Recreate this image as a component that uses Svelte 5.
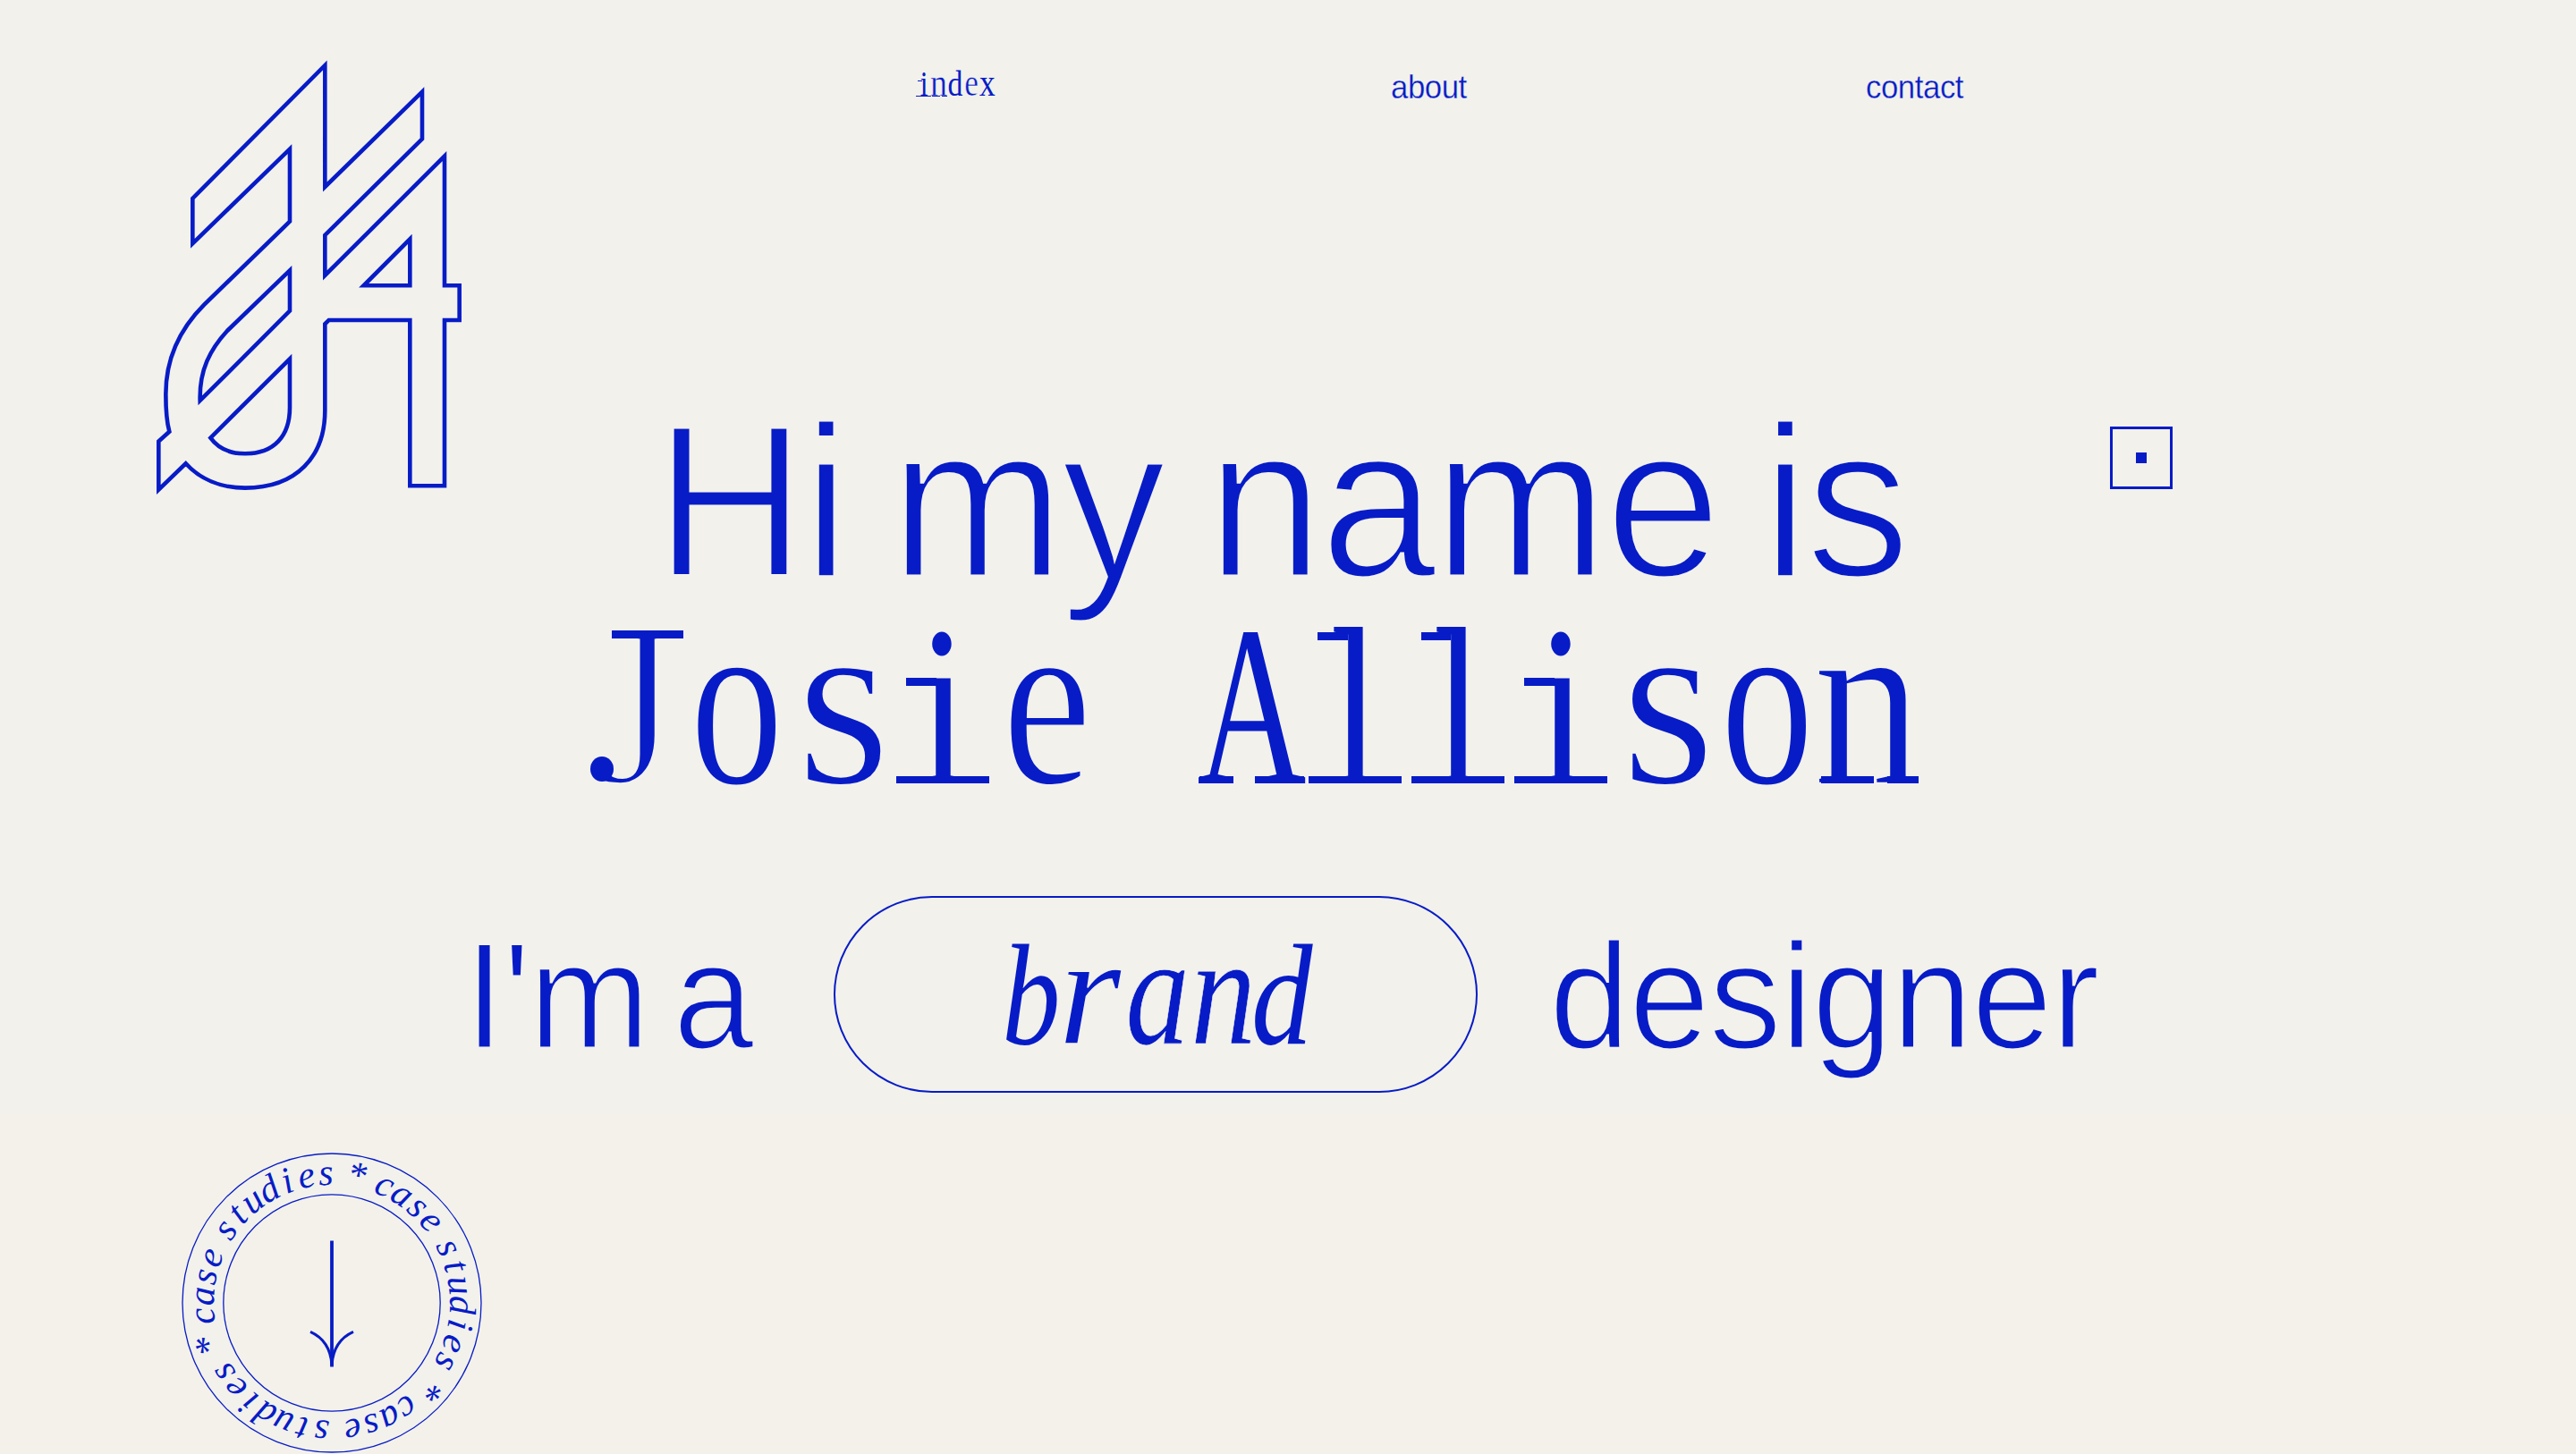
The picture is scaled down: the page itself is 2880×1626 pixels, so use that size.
<script>
  // Per-letter fitting for the fixed-pitch serif: horizontal scale, vertical
  // scale, offset (em), outline thinning (em), slab strokes [x, top, width]
  // and an optional round terminal [x, top, width, height].
  const roman = {
    J: { sx: 0.92, sy: 0.99, dx: 0.052, thin: 0.026, slabs: [[0.126, 0.658, 0.309]], ball: [0.035, 0.115, 0.1, 0.108] },
    o: { sx: 0.8, sy: 1.065, dx: 0.022, thin: 0.008 },
    s: { sx: 1.04, sy: 1.065, dx: 0.036, thin: 0.012 },
    i: { sx: 0.78, sy: 0.985, dx: 0.116, thin: 0, slabs: [[0.021, 0.033, 0.4], [0.0635, 0.453, 0.13]] },
    e: { sx: 0.87, sy: 1.065, dx: 0.032, thin: 0.012 },
    A: { sx: 0.65, sy: 0.985, dx: -0.014, thin: 0, slabs: [[-0.004, 0.033, 0.148], [0.236, 0.033, 0.212]] },
    l: { sx: 0.78, sy: 0.97, dx: 0.116, thin: 0, slabs: [[0.022, 0.033, 0.4], [0.0625, 0.65, 0.13]] },
    n: { sx: 0.936, sy: 1.065, dx: -0.022, thin: 0.01, slabs: [[0.011, 0.033, 0.225], [0.295, 0.033, 0.137]] },
    d: { sx: 0.83, sy: 1, dx: 0.01, thin: 0 },
    x: { sx: 0.87, sy: 1.065, dx: 0, thin: 0 },
    ' ': { sx: 1, sy: 1, dx: 0, thin: 0 }
  };
  const italic = {
    b: { sx: 0.79, sy: 0.975, dx: 0.014, thin: 0 },
    r: { sx: 1.1, sy: 1.07, dx: -0.03, thin: 0.008 },
    a: { sx: 0.87, sy: 1.07, dx: 0.008, thin: 0.004 },
    n: { sx: 0.89, sy: 1.07, dx: 0.024, thin: 0.004 },
    d: { sx: 0.83, sy: 0.975, dx: 0.018, thin: 0 }
  };

  // Text set round the badge, one rotated position per character.
  const phrase = 'case studies * ';
  const ringText = phrase.repeat(3);
  const widths = { c: 0.444, a: 0.5, s: 0.389, e: 0.444, t: 0.278, u: 0.5, d: 0.5, i: 0.278, '*': 0.5, ' ': 0.25 };
  const steps = [8.8, 8.8, 8.8, 14, 0, 8.8, 8.8, 8.8, 8.8, 8.8, 8.8, 13.6, 0, 13.2, 0];
  const ringSize = 42;
  const baseline = 132;
  const xs = [];
  const ys = [];
  const turns = [];
  for (let turn = 0; turn < 3; turn++) {
    let angle = 24.2 + turn * 120;
    for (let n = 0; n < phrase.length; n++) {
      const a = (angle * Math.PI) / 180;
      const half = (widths[phrase[n]] * ringSize) / 2;
      xs.push((168 + baseline * Math.sin(a) - half * Math.cos(a)).toFixed(2));
      ys.push((168 - baseline * Math.cos(a) - half * Math.sin(a)).toFixed(2));
      turns.push(angle.toFixed(2));
      angle += steps[n];
    }
  }
</script>

{#snippet fixed(text, table)}
  <span class="fixed">{#each [...text] as ch}<span class="cell"><span
      class="glyph"
      style="--sx:{table[ch].sx};--sy:{table[ch].sy};--dx:{table[ch].dx}em;--thin:{table[ch].thin}em">{ch}</span>{#each table[ch].slabs ?? [] as [x, y, w]}<i
      class="slab"
      style="--x:{x}em;--y:{y}em;--w:{w}em"></i>{/each}{#if table[ch].ball}{@const [x, y, w, h] = table[ch].ball}<i
      class="slab ball"
      style="--x:{x}em;--y:{y}em;--w:{w}em;--h:{h}em"></i>{/if}</span>{/each}</span>
{/snippet}

<div class="page">
  <aside>
    <svg class="logo" viewBox="60 70 1050 1480" aria-label="JA">
      <path d="M640 97V505L966 186V344L640 667V802L1041 402V836H1091V952H1041V1508H925V952H653L640 965V1255C640 1410 545 1515 372 1515C290 1515 220 1485 173 1433L82 1521V1359L118 1326C108 1290 106 1235 106 1200C106 1080 150 985 235 900L522 621V378L196 695V544Z" />
      <path d="M925 680V836H770Z" />
      <path d="M522 785V921L221 1222C218 1120 255 1050 312 988Z" />
      <path d="M522 1082V1245C522 1340 470 1400 372 1400C320 1400 280 1380 256 1347Z" />
    </svg>
    <svg class="badge" viewBox="0 0 336 336">
      <circle class="band" cx="168" cy="168" r="144.2" />
      <circle class="ring" cx="168" cy="168" r="167" />
      <circle class="ring" cx="168" cy="168" r="121.2" />
      <text xml:space="preserve" x={xs.join(' ')} y={ys.join(' ')} rotate={turns.join(' ')}>{ringText}</text>
      <path class="arrow" d="M168 98.5V239.5" />
      <path class="arrow head" d="M144 200.3C159 207 167 220 168 238C169 220 177 207 192 200.3" />
    </svg>
  </aside>

  <main>
    <nav>
      <a class="current" href="#index">{@render fixed('index', roman)}</a>
      <a href="#about">about</a>
      <a href="#contact">contact</a>
    </nav>
    <div class="intro">
      <h1>
        <span class="sans hello">Hi my name is</span>
        <span class="name">{@render fixed('Josie Allison', roman)}</span>
      </h1>
      <div class="mark"><span></span></div>
    </div>
    <div class="role">
      <span class="sans lead">I'm a</span>
      <span class="pill">{@render fixed('brand', italic)}</span>
      <span class="sans tail">designer</span>
    </div>
  </main>
</div>

<style>
  :global(body) {
    margin: 0;
    overflow: hidden;
    background: #f2f1ec;
  }
  .page {
    display: flex;
    box-sizing: border-box;
    width: 2880px;
    height: 1626px;
    overflow: hidden;
    color: #071cc6;
    --paper: #f2f1ec;
    background: linear-gradient(#f2f1ec 1247px, #f4f1ea 1247px);
    font-family: 'Liberation Sans', Arial, sans-serif;
  }
  aside {
    display: flex;
    flex: none;
    flex-direction: column;
    justify-content: space-between;
    align-items: flex-start;
    box-sizing: border-box;
    width: 500px;
    height: 1626px;
    padding: 63.6px 0 1.5px 170px;
  }
  svg {
    flex: none;
    display: block;
    overflow: visible;
  }
  .logo {
    width: 350px;
    height: 493.3px;
    fill: none;
    stroke: currentColor;
    stroke-width: 13.8;
    stroke-miterlimit: 10;
  }
  .badge {
    width: 336px;
    height: 336px;
    margin-left: 33.3px;
    fill: none;
    stroke: currentColor;
  }
  .badge .band {
    stroke: #f2f1ec;
    stroke-width: 46;
  }
  .badge .ring {
    stroke-width: 1.3;
  }
  .badge text {
    fill: currentColor;
    stroke: none;
    font: italic 42px 'Liberation Serif', 'Times New Roman', serif;
    white-space: pre;
  }
  .badge .arrow {
    stroke-width: 3.8;
  }
  .badge .head {
    stroke-width: 3;
  }
  main {
    flex: 1;
  }
  nav {
    display: grid;
    grid-template-columns: repeat(3, 531px);
    align-items: start;
    box-sizing: border-box;
    height: 433.6px;
    margin-left: 523.5px;
    padding-top: 74.2px;
  }
  nav a {
    justify-self: start;
    margin-top: 5.4px;
    color: inherit;
    font-size: 36px;
    line-height: 1;
    letter-spacing: -0.012em;
    text-decoration: none;
    transform: scaleX(0.965);
    transform-origin: 0 0;
    -webkit-text-stroke: 0.3px var(--paper);
  }
  nav .current {
    margin-top: 0;
    font-size: 40.6px;
    letter-spacing: 0;
    transform: none;
  }
  .intro {
    display: flex;
    align-items: flex-start;
  }
  h1 {
    margin: 0;
    width: 1858.5px;
    padding-top: 5px;
    font-weight: 400;
  }
  .sans {
    display: block;
    white-space: nowrap;
    line-height: 1;
    transform: scaleX(0.962);
    transform-origin: 0 0;
  }
  .hello {
    margin-left: 231.5px;
    font-size: 243px;
    letter-spacing: -0.0135em;
    word-spacing: -0.056em;
    -webkit-text-stroke: 5px var(--paper);
  }
  .name {
    display: block;
    margin: -24px 0 0 150.9px;
    font-size: 260px;
    line-height: 1;
  }
  .mark {
    display: grid;
    place-items: center;
    box-sizing: border-box;
    width: 70px;
    height: 70px;
    margin-top: 43px;
    border: 3px solid currentColor;
  }
  .mark span {
    width: 12px;
    height: 12px;
    background: currentColor;
  }
  .role {
    display: flex;
    align-items: center;
    margin: 84.3px 0 0 19px;
    font-size: 169px;
    letter-spacing: -0.007em;
    word-spacing: -0.11em;
  }
  .role .sans {
    margin-top: 3px;
    -webkit-text-stroke: 3.2px var(--paper);
  }
  .role .lead {
    width: 413px;
    letter-spacing: -0.012em;
    word-spacing: -0.095em;
  }
  .tail {
    margin-left: 79.6px;
  }
  .pill {
    display: flex;
    flex: none;
    align-items: center;
    justify-content: center;
    box-sizing: border-box;
    width: 720px;
    height: 220px;
    padding-bottom: 1px;
    border: 2px solid currentColor;
    border-radius: 110px;
    font-size: 165px;
    font-style: italic;
    --cell: 0.422em;
  }
  .fixed {
    display: flex;
    font-family: 'Liberation Serif', 'Times New Roman', serif;
    line-height: 1;
    letter-spacing: 0;
  }
  .cell {
    position: relative;
    width: var(--cell, 0.44308em);
    height: 1em;
    white-space: pre;
  }
  .glyph {
    display: block;
    transform: translateX(var(--dx)) scale(var(--sx), var(--sy));
    transform-origin: 0 0.8375em;
    -webkit-text-stroke: var(--thin) var(--paper);
  }
  .slab {
    position: absolute;
    left: var(--x);
    top: calc(0.8405em - var(--y));
    width: var(--w);
    height: var(--h, 0.033em);
    background: currentColor;
  }
  .ball {
    border-radius: 50%;
  }
</style>
